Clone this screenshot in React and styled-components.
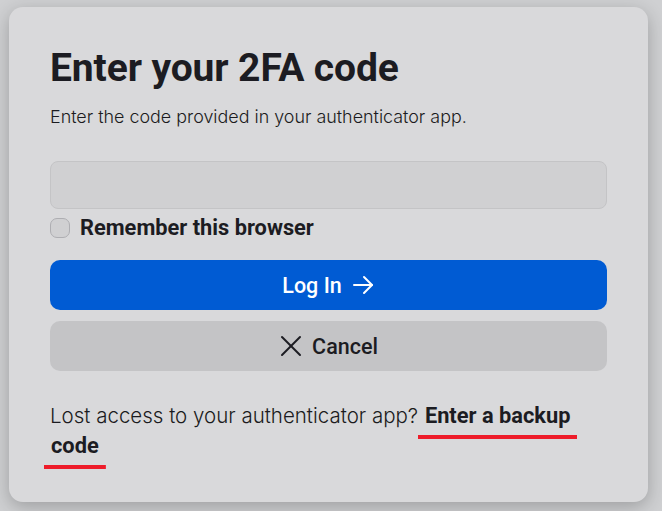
import React, { useState } from "react";
import styled, { createGlobalStyle } from "styled-components";

const GlobalStyle = createGlobalStyle`
    html, body {
        margin: 0;
        padding: 0;
        background: #cfd0d2;
    }
    body {
        font-family: Inter, "Noto Sans", sans-serif;
        color: #1b1b20;
    }
`

const Page = () => {
    const [remember, setRemember] = useState(false);
    const [code, setCode] = useState("");

    return (
        <>
            <GlobalStyle />
            <Backdrop>
                <Card>
                    <Title>Enter your 2FA code</Title>
                    <Subtitle>Enter the code provided in your authenticator app.</Subtitle>
                    <CodeInput value={code} onChange={e => setCode(e.target.value)} />
                    <CheckRow>
                        <Check checked={remember} onClick={() => setRemember(!remember)} />
                        <CheckLabel>Remember this browser</CheckLabel>
                    </CheckRow>
                    <Buttons>
                        <Button $primary>
                            Log In
                            <svg width="24" height="24" viewBox="0 0 24 24" fill="none" stroke="currentColor" strokeWidth="2" strokeLinecap="round" strokeLinejoin="round">
                                <path d="M3 12h18" />
                                <path d="M13 4l8 8-8 8" />
                            </svg>
                        </Button>
                        <Button>
                            <svg width="24" height="24" viewBox="0 0 24 24" fill="none" stroke="currentColor" strokeWidth="2" strokeLinecap="round">
                                <path d="M3 3l18 18" />
                                <path d="M21 3L3 21" />
                            </svg>
                            Cancel
                        </Button>
                    </Buttons>
                    <Footer>
                        Lost access to your authenticator app? <BackupLink>Enter a backup code</BackupLink>
                    </Footer>
                </Card>
            </Backdrop>
        </>
    )
}

export default Page;

const Backdrop = styled.div`
    padding: 7px 14px 11px 9px;
`

const Card = styled.div`
    background: #d9d9db;
    border-radius: 14px;
    box-shadow: 0 5px 18px rgba(0, 0, 0, 0.24);
    padding: 41px 41px 41px 41px;
    display: flex;
    flex-direction: column;
`

const Title = styled.h1`
    margin: 0;
    font-family: Roboto, "Liberation Sans", sans-serif;
    font-weight: 700;
    font-size: 39px;
    line-height: 40px;
    letter-spacing: -0.1px;
    color: #1c1c22;
`

const Subtitle = styled.p`
    margin: 17px 0 0;
    font-size: 17.9px;
    line-height: 24px;
    font-weight: 300;
`

const CodeInput = styled.input`
    margin-top: 32px;
    height: 48px;
    box-sizing: border-box;
    background: #d0d0d2;
    border: 1px solid #c4c4c6;
    border-radius: 8px;
    padding: 0 14px;
    font-size: 18px;
    outline: none;
`

const CheckRow = styled.label`
    margin-top: 8px;
    display: flex;
    align-items: center;
    gap: 10px;
    cursor: pointer;
`

const Check = styled.span`
    width: 20px;
    height: 20px;
    box-sizing: border-box;
    border-radius: 7px;
    border: 1px solid #aeaeb2;
    background: ${props => props.checked ? "#005bd3" : "#d0d0d2"};
`

const CheckLabel = styled.span`
    font-family: Roboto, "Liberation Sans", sans-serif;
    font-weight: 700;
    font-size: 21.8px;
    line-height: 22px;
    color: #1c1c22;
`

const Buttons = styled.div`
    margin-top: 21px;
    display: flex;
    flex-direction: column;
    gap: 11px;
`

const Button = styled.button`
    height: 50px;
    border: none;
    border-radius: 10px;
    display: flex;
    align-items: center;
    justify-content: center;
    gap: 9px;
    font-family: Roboto, "Liberation Sans", sans-serif;
    font-weight: 500;
    font-size: 21.5px;
    cursor: pointer;
    background: ${props => props.$primary ? "#005bd3" : "#c4c4c6"};
    color: ${props => props.$primary ? "#ffffff" : "#1c1c22"};

    &:hover {
        background: ${props => props.$primary ? "#004fb8" : "#bababc"};
    }
`

const Footer = styled.p`
    margin: 30px 0 0;
    font-size: 20.5px;
    line-height: 30px;
    font-weight: 300;
`

const BackupLink = styled.a`
    font-family: Roboto, "Liberation Sans", sans-serif;
    font-weight: 700;
    font-size: 21.8px;
    color: #1c1c22;
    cursor: pointer;
    padding: 0 7px 11px;
    margin: 0 -6px;
    -webkit-box-decoration-break: clone;
    box-decoration-break: clone;
    background: linear-gradient(#ee1c2a, #ee1c2a) bottom / 100% 4px no-repeat;
`
